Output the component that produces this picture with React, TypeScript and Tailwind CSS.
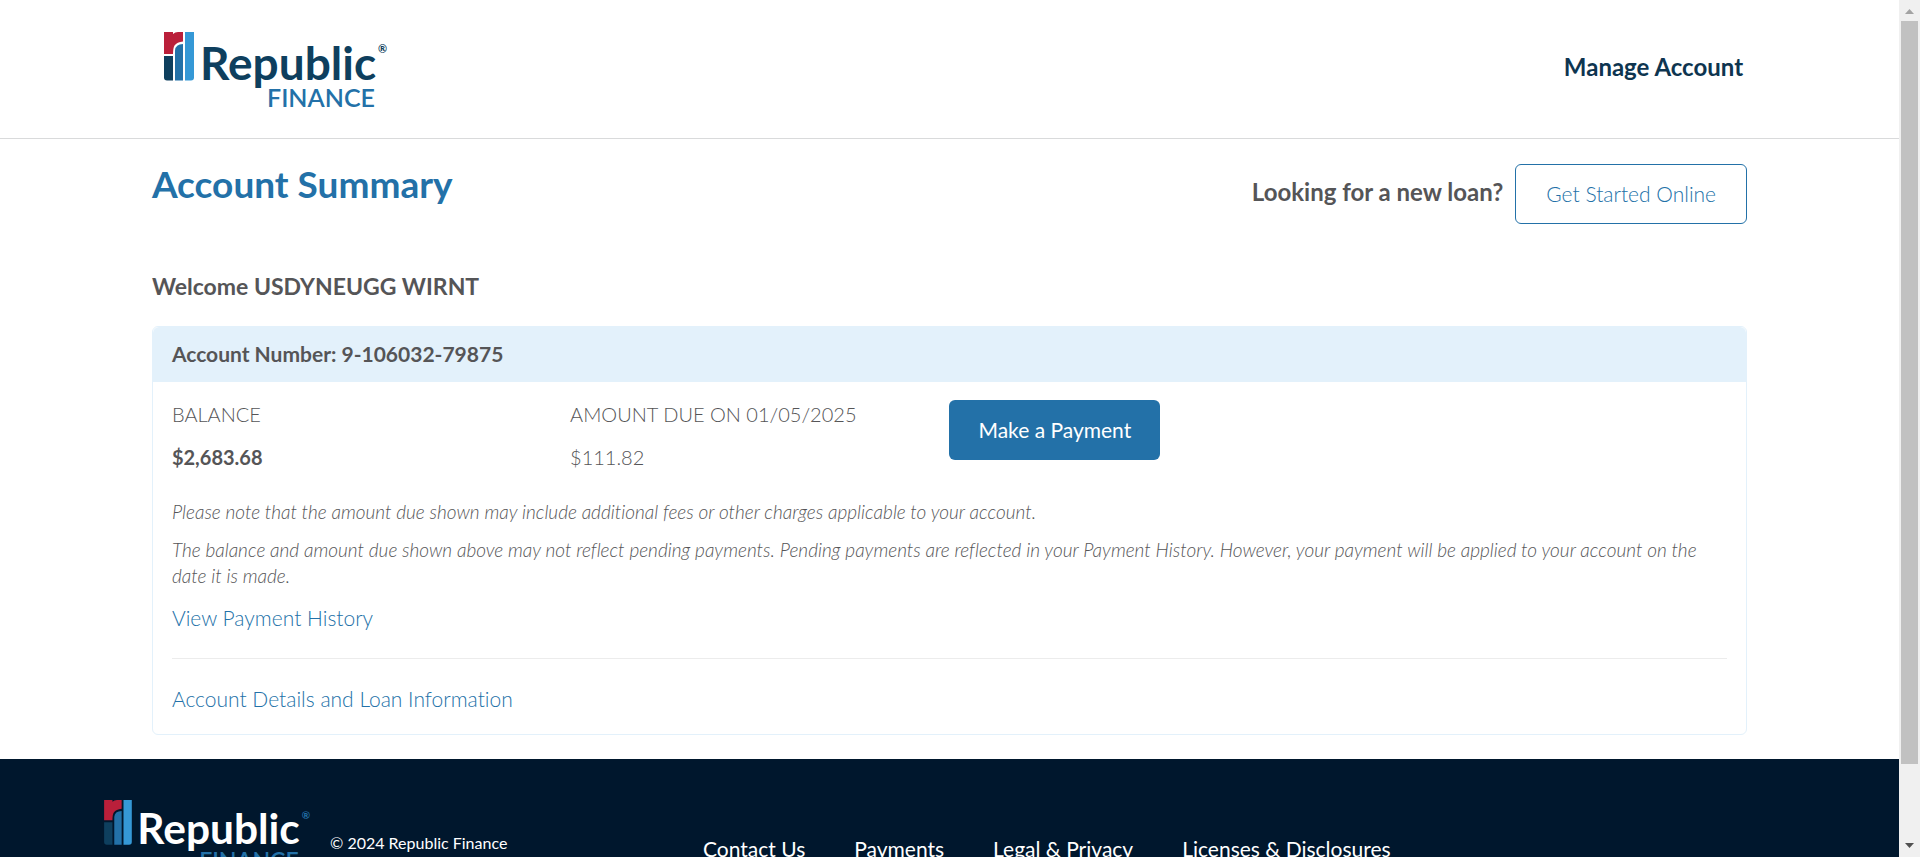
import type { ReactNode } from "react";

function Mark({ stem }: { stem: string }) {
  return (
    <g>
      <path d="M0 0H9V2Q11 0 14 0H19V9.500Q13 10 10.500 13.500Q9 16 9 22H0Z" fill="#ba1f3a" />
      <path d="M0 24H9V48.500H3Q0 48.500 0 45.500Z" fill={stem} />
      <path d="M11 48.500V18.500Q11.500 12 19 12V48.500Z" fill="#2371a8" />
      <path d="M21 0H30V45.500Q30 48.500 27 48.500H21Z" fill="#3598d6" />
    </g>
  );
}

function Logo({ word, stem, reg, className }: { word: string; stem: string; reg: string; className: string }) {
  return (
    <svg viewBox="0 0 224 78" className={className} role="img" aria-label="Republic Finance">
      <Mark stem={stem} />
      <text x="36" y="48" fill={word} fontFamily="Lato, sans-serif" fontWeight="700" fontSize="46">
        Republic
      </text>
      <text x="103" y="75" fill="#2371a8" fontFamily="Lato, sans-serif" fontWeight="600" fontSize="25">
        FINANCE
      </text>
      <text x="214" y="21" fill={reg} fontFamily="Lato, sans-serif" fontWeight="700" fontSize="11">
        ®
      </text>
    </svg>
  );
}

function TextLink({ children }: { children: ReactNode }) {
  return (
    <a href="#" className="text-[21px] leading-7 text-[#2371a8]">
      {children}
    </a>
  );
}

function Header() {
  return (
    <header className="border-b border-[#d9dadb]">
      <div className="mx-auto flex h-[138px] w-[84%] items-center justify-between">
        <a href="#" className="pt-1 pl-3">
          <Logo word="#0e3f5e" stem="#0e3f5e" reg="#0e3f5e" className="h-[78px] w-56" />
        </a>
        <a href="#" className="pr-1 pb-1 text-2xl leading-8 font-bold text-[#0e3550]">
          Manage Account
        </a>
      </div>
    </header>
  );
}

function AccountCard() {
  return (
    <section className="mt-6 rounded-md border border-[#e3f1fb]">
      <h3 className="rounded-t-md bg-[#e3f1fb] px-[19px] pt-[13px] pb-3.5 text-[21px] leading-7 font-bold">
        Account Number: 9-106032-79875
      </h3>
      <div className="px-[19px] pb-[21px]">
        <div className="flex pt-[18px]">
          <dl className="w-[25.600%]">
            <dt className="text-xl leading-7">BALANCE</dt>
            <dd className="mt-[15px] text-xl leading-7 font-bold">$2,683.68</dd>
          </dl>
          <dl className="w-[24.400%]">
            <dt className="text-xl leading-7">AMOUNT DUE ON 01/05/2025</dt>
            <dd className="mt-[15px] text-xl leading-7">$111.82</dd>
          </dl>
          <button className="h-[60px] rounded-md bg-[#2371a8] px-[29px] text-[21px] font-normal text-white">
            Make a Payment
          </button>
        </div>
        <p className="mt-7 text-[19px] leading-[26px] italic">
          Please note that the amount due shown may include additional fees or other charges applicable to your account.
        </p>
        <p className="mt-3 text-[19px] leading-[26px] italic">
          The balance and amount due shown above may not reflect pending payments. Pending payments are reflected in
          your Payment History. However, your payment will be applied to your account on the date it is made.
        </p>
        <div className="mt-[15px] border-b border-[#ececec] pb-[26px]">
          <TextLink>View Payment History</TextLink>
        </div>
        <div className="pt-[26px]">
          <TextLink>Account Details and Loan Information</TextLink>
        </div>
      </div>
    </section>
  );
}

function Footer() {
  const links = ["Contact Us", "Payments", "Legal & Privacy", "Licenses & Disclosures"];
  return (
    <footer className="mt-6 flex h-40 items-start bg-[#00172d] pt-[41px] pl-[104px] font-normal text-white">
      <Logo word="#ffffff" stem="#0e3f5e" reg="#2371a8" className="h-[72px] w-[207px]" />
      <p className="mt-[31px] ml-[19px] w-[373px] text-base leading-6">© 2024 Republic Finance</p>
      <nav className="mt-[35px] flex gap-[49px] text-[21px] leading-7">
        {links.map((label) => (
          <a key={label} href="#">
            {label}
          </a>
        ))}
      </nav>
    </footer>
  );
}

function Scrollbar() {
  return (
    <div className="flex w-[21px] shrink-0 flex-col items-center bg-[#f0f0f0]" aria-hidden="true">
      <svg viewBox="0 0 21 21" className="h-[21px] w-[21px]">
        <path d="M6 14H15L10.500 9Z" fill="#a3a3a3" />
      </svg>
      <div className="w-[17px] grow bg-[#c1c1c1]" />
      <div className="h-[8.400%]" />
      <svg viewBox="0 0 21 21" className="h-[21px] w-[21px]">
        <path d="M6 7H15L10.500 12Z" fill="#505050" />
      </svg>
    </div>
  );
}

export default function App() {
  return (
    <div className="flex h-screen overflow-hidden bg-white font-[Lato,sans-serif] font-light text-[#555557] [font-variant-ligatures:none]">
      <div className="min-w-0 grow overflow-hidden">
        <Header />
        <main className="mx-auto w-[84%] pt-[25px]">
          <div className="flex justify-between">
            <h1 className="text-[37px] leading-10 font-bold text-[#2371a8]">Account Summary</h1>
            <div className="flex items-center gap-3">
              <span className="pb-1 text-2xl leading-8 font-bold">Looking for a new loan?</span>
              <button className="h-[60px] rounded-md border border-[#2371a8] px-[30px] text-[21px] text-[#2371a8]">
                Get Started Online
              </button>
            </div>
          </div>
          <h2 className="mt-[46px] text-[23px] leading-8 font-bold">Welcome USDYNEUGG WIRNT</h2>
          <AccountCard />
        </main>
        <Footer />
      </div>
      <Scrollbar />
    </div>
  );
}
